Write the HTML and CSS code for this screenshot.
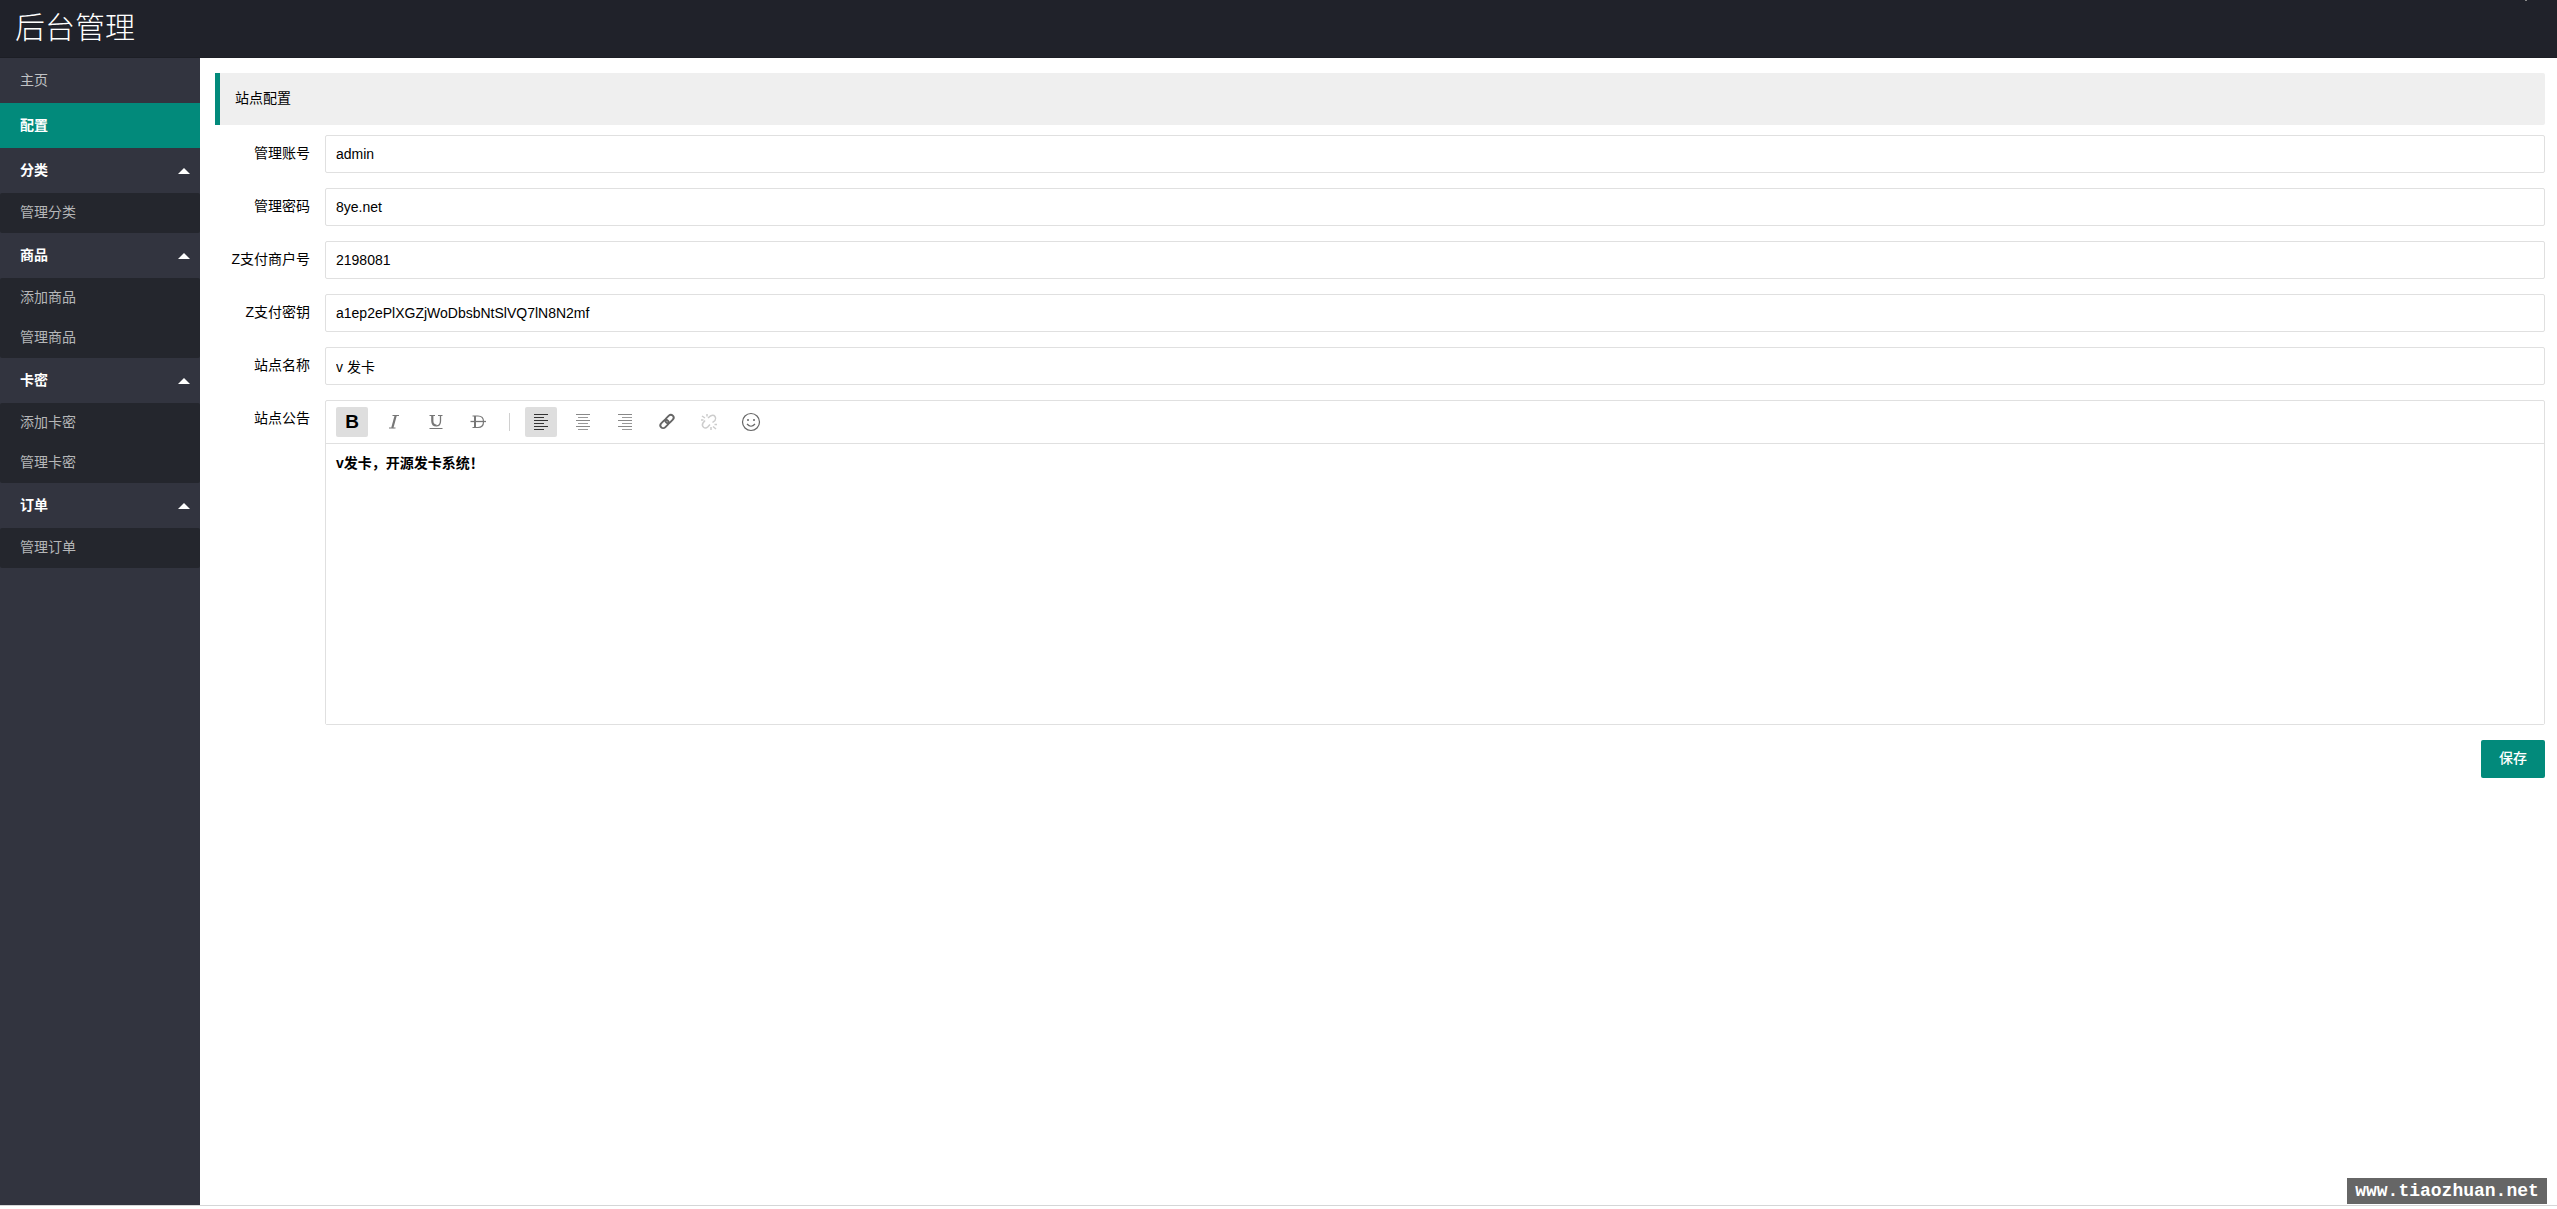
FILE: index.html
```html
<!DOCTYPE html>
<html lang="zh-CN">
<head>
<meta charset="utf-8">
<title>后台管理</title>
<link rel="stylesheet" href="styles.css">
</head>
<body>
<div class="layout">
  <header class="header"><h1 class="logo">后台管理</h1></header>
  <div class="main">
    <nav class="side">
      <a class="item plain" href="#">主页</a>
      <a class="item active" href="#">配置</a>
      <a class="item group" href="#">分类</a>
      <div class="children">
        <a class="child" href="#">管理分类</a>
      </div>
      <a class="item group" href="#">商品</a>
      <div class="children">
        <a class="child" href="#">添加商品</a>
        <a class="child" href="#">管理商品</a>
      </div>
      <a class="item group" href="#">卡密</a>
      <div class="children">
        <a class="child" href="#">添加卡密</a>
        <a class="child" href="#">管理卡密</a>
      </div>
      <a class="item group" href="#">订单</a>
      <div class="children">
        <a class="child" href="#">管理订单</a>
      </div>
    </nav>
    <main class="content">
      <h2 class="quote">站点配置</h2>
      <form class="form">
        <div class="row"><label class="label" for="user">管理账号</label><input class="input" id="user" type="text" value="admin"></div>
        <div class="row"><label class="label" for="pass">管理密码</label><input class="input" id="pass" type="text" value="8ye.net"></div>
        <div class="row"><label class="label" for="pid">Z支付商户号</label><input class="input" id="pid" type="text" value="2198081"></div>
        <div class="row"><label class="label" for="key">Z支付密钥</label><input class="input" id="key" type="text" value="a1ep2ePlXGZjWoDbsbNtSlVQ7lN8N2mf"></div>
        <div class="row"><label class="label" for="name">站点名称</label><input class="input" id="name" type="text" value="v 发卡"></div>
        <div class="row">
          <label class="label" for="notice">站点公告</label>
          <div class="editor">
            <div class="toolbar">
              <button class="tool on bold" type="button" aria-label="加粗">B</button>
              <button class="tool" type="button" aria-label="斜体"><svg viewBox="0 0 20 20"><path d="M8.500 3.500h6.500M5 16h6.500" stroke="#777" stroke-width="1.200"/><path d="M11.700 3.500L8.300 16" stroke="#777" stroke-width="2.200"/></svg></button>
              <button class="tool" type="button" aria-label="下划线"><svg viewBox="0 0 20 20"><path d="M3.500 3.500h5.500M12 3.500h4.500M3.500 16.500h13" stroke="#777" stroke-width="1.200"/><path d="M6.300 3.500V9q0 4.500 4.200 4.500" fill="none" stroke="#777" stroke-width="2.200"/><path d="M10.200 13.900q4.300 0 4.300-4.900V3.500" fill="none" stroke="#777" stroke-width="1.300"/></svg></button>
              <button class="tool" type="button" aria-label="删除线"><svg viewBox="0 0 20 20"><path d="M4.500 4H10q5.500 0 5.500 5.700T10 15.500H4.500" fill="none" stroke="#777" stroke-width="1.200"/><path d="M7 4v11.500" stroke="#777" stroke-width="2"/><path d="M2.500 9.500h15.500" stroke="#777" stroke-width="1.300"/></svg></button>
              <span class="divider"></span>
              <button class="tool on" type="button" aria-label="左对齐"><svg viewBox="0 0 20 20"><path d="M3 2.500h14M3 5.500h10M3 8.500h14M3 11.500h10M3 14.500h14M3 17.500h10" stroke="#333"/></svg></button>
              <button class="tool" type="button" aria-label="居中对齐"><svg viewBox="0 0 20 20"><path d="M3 2.500h14M3 8.500h14M3 14.500h14" stroke="#888"/><path d="M5 5.500h10M5 11.500h10M5 17.500h10" stroke="#999"/></svg></button>
              <button class="tool" type="button" aria-label="右对齐"><svg viewBox="0 0 20 20"><path d="M3 2.500h14M3 8.500h14M3 14.500h14" stroke="#888"/><path d="M7 5.500h10M7 11.500h10M7 17.500h10" stroke="#999"/></svg></button>
              <button class="tool" type="button" aria-label="插入链接"><svg viewBox="0 0 20 20"><g fill="none" stroke="#666" stroke-width="1.900" transform="rotate(-45 10 9.500)"><rect x="1.800" y="6.700" width="9.400" height="5.600" rx="2.800"/><rect x="8.800" y="6.700" width="9.400" height="5.600" rx="2.800"/></g></svg></button>
              <button class="tool" type="button" aria-label="清除链接"><svg viewBox="0 0 20 20"><g fill="none" stroke="#ccc" stroke-width="1.500"><path d="M9 6l2.500-2q3-1.500 4.500.5t0 4L13.500 10.500M6 8.500L4 11q-1.500 2.500.5 4.200t4.200-.2L11 12.500"/><path d="M3 4l3 2M8 2v2.500M2 8h2.500M15.500 12.500H18M12 15v3M14 14.500l3 2.500"/></g></svg></button>
              <button class="tool" type="button" aria-label="表情"><svg viewBox="0 0 20 20"><circle cx="10" cy="10" r="8.500" fill="none" stroke="#666" stroke-width="1.200"/><path d="M6 12q4 4.500 8 0" fill="none" stroke="#666" stroke-width="1.200"/><circle cx="7" cy="8" r="1" fill="#666"/><circle cx="13" cy="8" r="1" fill="#666"/></svg></button>
            </div>
            <textarea class="text" id="notice">v发卡，开源发卡系统！</textarea>
          </div>
        </div>
        <div class="actions"><button class="save" type="submit">保存</button></div>
      </form>
    </main>
  </div>
  <div class="mark">www.tiaozhuan.net</div>
</div>
</body>
</html>
```
FILE: styles.css
```css
* {
  box-sizing: border-box;
}

body {
  margin: 0;
  background: #fff;
  color: #000;
  font: 14px/20px "Liberation Sans", "Noto Sans CJK SC", sans-serif;
}

a {
  text-decoration: none;
}

.layout {
  position: relative;
  display: flex;
  flex-direction: column;
  min-height: calc(100vh - 3px);
  border-bottom: 1px solid #d5d6d7;
}

.header {
  position: relative;
  height: 58px;
  padding: 0 15px;
  background: #20222a;
  border-bottom: 1px solid #1c1e25;
}

.header::after {
  content: "";
  position: absolute;
  top: 0;
  right: 30px;
  width: 2px;
  height: 1px;
  background: #888;
}

.logo {
  margin: 0;
  color: #fff;
  font-size: 30px;
  font-weight: 200;
  line-height: 56px;
}

.main {
  flex: 1;
  display: flex;
}

.side {
  width: 200px;
  background: #32343f;
}

.item,
.child {
  display: flex;
  align-items: center;
  justify-content: space-between;
  padding: 0 10px 2px 20px;
}

.item {
  height: 45px;
  color: #fff;
  font-weight: 700;
}

.plain {
  color: #c1c2c5;
  font-weight: 400;
}

.active {
  background: #028a7b;
}

.group::after {
  content: "";
  margin-top: 2px;
  border: 6px solid transparent;
  border-top: 0;
  border-bottom-color: #fff;
}

.children {
  background: #24262d;
  border-radius: 2px;
}

.child {
  height: 40px;
  color: #b5b6b8;
}

.content {
  flex: 1;
  min-width: 0;
  padding: 15px 12px 15px 15px;
}

.quote {
  margin: 0 0 10px;
  padding: 15px 15px 17px;
  border-left: 5px solid #028a7b;
  border-radius: 0 2px 2px 0;
  background: #efefef;
  font-size: 14px;
  font-weight: 400;
}

.form {
  display: flex;
  flex-direction: column;
  gap: 15px;
}

.row {
  display: flex;
}

.label {
  width: 110px;
  padding: 8px 15px 10px;
  text-align: right;
  white-space: nowrap;
}

.input,
.editor {
  flex: 1;
  min-width: 0;
  border: 1px solid #e0e0e0;
  border-radius: 2px;
  background: #fff;
}

.input {
  height: 38px;
  padding: 0 10px 1px;
  color: #000;
  font: inherit;
}

.toolbar {
  display: flex;
  align-items: center;
  gap: 10px;
  height: 43px;
  padding: 0 10px;
  border-bottom: 1px solid #e0e0e0;
}

.tool {
  display: flex;
  align-items: center;
  justify-content: center;
  width: 32px;
  height: 30px;
  padding: 0;
  border: 0;
  border-radius: 2px;
  background: none;
}

.tool.on {
  background: #dedede;
}

.tool.bold {
  color: #000;
  font: 700 19px/20px "Liberation Sans", sans-serif;
}

.tool svg {
  width: 20px;
  height: 20px;
}

.divider {
  width: 1px;
  height: 18px;
  margin: 0 5px;
  background: #d0d0d0;
}

.text {
  display: block;
  width: 100%;
  height: 280px;
  padding: 9px 10px;
  border: 0;
  resize: none;
  color: #000;
  font: inherit;
  font-weight: 700;
}

.actions {
  display: flex;
  justify-content: flex-end;
}

.save {
  height: 38px;
  padding: 0 18px 2px;
  border: 0;
  border-radius: 2px;
  background: #028a7b;
  color: #fff;
  font: inherit;
  font-weight: 500;
}

.mark {
  position: absolute;
  right: 10px;
  bottom: 1px;
  width: 200px;
  background: #666;
  color: #fff;
  font: 700 18px/26px "Liberation Mono", monospace;
  text-align: center;
}
```
